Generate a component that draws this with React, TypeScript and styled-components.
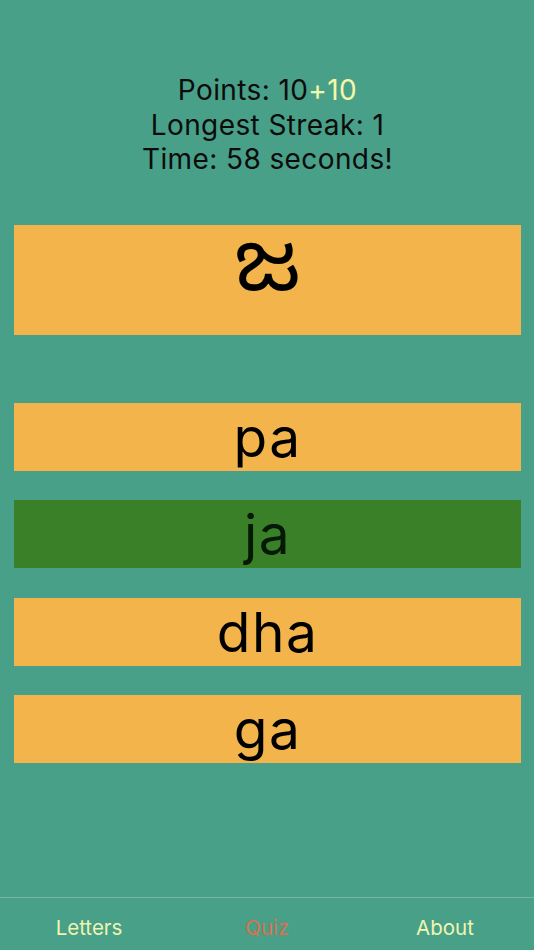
import React from "react";
import styled, { createGlobalStyle } from "styled-components";

// ==================== Main Component ====================
const answers = [
  { label: "pa", correct: false },
  { label: "ja", correct: true },
  { label: "dha", correct: false },
  { label: "ga", correct: false },
];

const tabs = [
  { label: "Letters", active: false },
  { label: "Quiz", active: true },
  { label: "About", active: false },
];

export default function App() {
  return (
    <>
      <GlobalStyle />
      <Screen>
        <Content>
          <Stats>
            <StatLine>
              Points: 10<Bonus>+10</Bonus>
            </StatLine>
            <StatLine>Longest Streak: 1</StatLine>
            <StatLine>Time: 58 seconds!</StatLine>
          </Stats>

          <LetterCard>ಜ</LetterCard>

          <Answers>
            {answers.map((a) => (
              <AnswerButton key={a.label} $correct={a.correct}>
                {a.label}
              </AnswerButton>
            ))}
          </Answers>
        </Content>

        <TabBar>
          {tabs.map((t) => (
            <Tab key={t.label} $active={t.active}>
              {t.label}
            </Tab>
          ))}
        </TabBar>
      </Screen>
    </>
  );
}

// ==================== Styled Components ====================

const GlobalStyle = createGlobalStyle`
  html, body {
    margin: 0;
    padding: 0;
    background: #48a088;
  }
  body {
    font-family: Inter, "Liberation Sans", Arial, sans-serif;
  }
`;

const Screen = styled.div`
  width: 534px;
  height: 950px;
  display: flex;
  flex-direction: column;
  background: #48a088;
  overflow: hidden;
`;

const Content = styled.div`
  flex: 1;
  display: flex;
  flex-direction: column;
  padding: 73px 13px 0 14px;
`;

const Stats = styled.div`
  display: flex;
  flex-direction: column;
  align-items: center;
  color: #0c0c0c;
  font-size: 28px;
  letter-spacing: 0.4px;
  line-height: 34.5px;
`;

const StatLine = styled.div``;

const Bonus = styled.span`
  color: #f4f7a8;
`;

const LetterCard = styled.div`
  margin-top: 48px;
  height: 110px;
  background: #f2b44b;
  display: flex;
  justify-content: center;
  align-items: flex-start;
  padding-top: 4px;
  box-sizing: border-box;
  font-family: "Noto Sans Kannada", "Noto Sans", sans-serif;
  font-size: 84px;
  line-height: 1.2;
  color: #000;
`;

const Answers = styled.div`
  margin-top: 68px;
  display: flex;
  flex-direction: column;
  gap: 29.5px;
`;

const AnswerButton = styled.div<{ $correct: boolean }>`
  height: 68px;
  background: ${(p) => (p.$correct ? "#398028" : "#f2b44b")};
  color: ${(p) => (p.$correct ? "#061806" : "#000")};
  display: flex;
  justify-content: center;
  align-items: center;
  font-size: 55px;
  letter-spacing: 1.5px;
  line-height: 1;
  padding-top: 1px;
  box-sizing: border-box;
`;

const TabBar = styled.div`
  height: 53px;
  border-top: 1.5px solid #74b9a6;
  display: grid;
  grid-template-columns: repeat(3, 1fr);
  align-items: center;
  padding-top: 7px;
  box-sizing: border-box;
`;

const Tab = styled.div<{ $active: boolean }>`
  text-align: center;
  font-size: 20.5px;
  color: ${(p) => (p.$active ? "#d9704f" : "#eef5b0")};
`;
